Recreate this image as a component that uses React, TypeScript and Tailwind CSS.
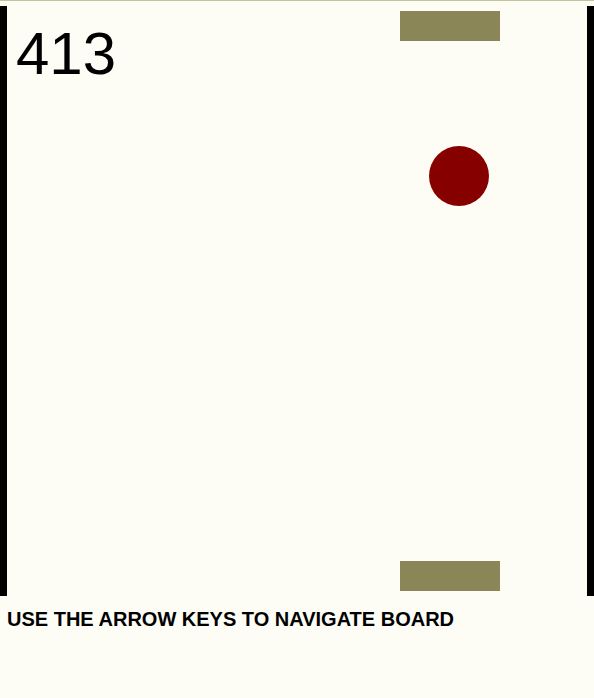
export default function App() {
  return (
    <div
      className="w-[594px] h-[698px] bg-[#fdfdf5] border-t border-[#c4c49a] overflow-hidden"
      style={{ fontFamily: '"Liberation Sans", Arial, sans-serif' }}
    >
      <div className="relative mt-[5px] h-[590px] border-x-[7px] border-black">
        <div className="absolute left-[9px] top-[18px] text-[60px] leading-none text-black">413</div>
        <div className="absolute left-[393px] top-[5px] w-[100px] h-[30px] bg-[#8a8658]" />
        <div className="absolute left-[422px] top-[140px] w-[60px] h-[60px] rounded-full bg-[#870000]" />
        <div className="absolute left-[393px] bottom-[5px] w-[100px] h-[30px] bg-[#8a8658]" />
      </div>
      <div className="pl-[7px] pt-[8px] text-[20px] font-bold text-black">
        USE THE ARROW KEYS TO NAVIGATE BOARD
      </div>
    </div>
  );
}
